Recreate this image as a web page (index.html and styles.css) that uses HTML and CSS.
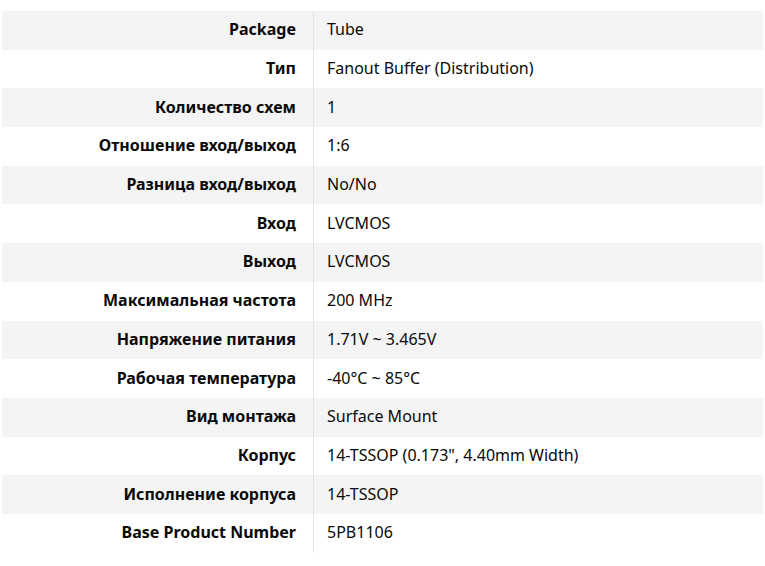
FILE: index.html
```html
<!DOCTYPE html>
<html lang="ru">
<head>
<meta charset="utf-8">
<link rel="stylesheet" href="styles.css">
</head>
<body>
<div class="specs">
  <div class="row"><div class="label">Package</div><div class="value">Tube</div></div>
  <div class="row"><div class="label">Тип</div><div class="value">Fanout Buffer (Distribution)</div></div>
  <div class="row"><div class="label">Количество схем</div><div class="value">1</div></div>
  <div class="row"><div class="label">Отношение вход/выход</div><div class="value">1:6</div></div>
  <div class="row"><div class="label">Разница вход/выход</div><div class="value">No/No</div></div>
  <div class="row"><div class="label">Вход</div><div class="value">LVCMOS</div></div>
  <div class="row"><div class="label">Выход</div><div class="value">LVCMOS</div></div>
  <div class="row"><div class="label">Максимальная частота</div><div class="value">200 MHz</div></div>
  <div class="row"><div class="label">Напряжение питания</div><div class="value">1.71V ~ 3.465V</div></div>
  <div class="row"><div class="label">Рабочая температура</div><div class="value">-40°C ~ 85°C</div></div>
  <div class="row"><div class="label">Вид монтажа</div><div class="value">Surface Mount</div></div>
  <div class="row"><div class="label">Корпус</div><div class="value">14-TSSOP (0.173", 4.40mm Width)</div></div>
  <div class="row"><div class="label">Исполнение корпуса</div><div class="value">14-TSSOP</div></div>
  <div class="row"><div class="label">Base Product Number</div><div class="value">5PB1106</div></div>
</div>
</body>
</html>
```
FILE: styles.css
```css
html, body {
  margin: 0;
  padding: 0;
  background: #fff;
}
body {
  font-family: "Noto Sans", "Open Sans", sans-serif;
  font-size: 16px;
  color: #0a0a0a;
}
.specs {
  margin: 11px 2px 0 2px;
  display: flex;
  flex-direction: column;
}
.row {
  display: grid;
  grid-template-columns: 311px 1fr;
  height: 38.7px;
}
.row:nth-child(odd) {
  background: #f4f4f4;
}
.label {
  font-weight: 700;
  padding: 0 17px 2px 0;
  display: flex;
  align-items: center;
  justify-content: flex-end;
}
.value {
  border-left: 1px solid #e3e3e3;
  padding: 0 0 2px 13px;
  display: flex;
  align-items: center;
}
```
